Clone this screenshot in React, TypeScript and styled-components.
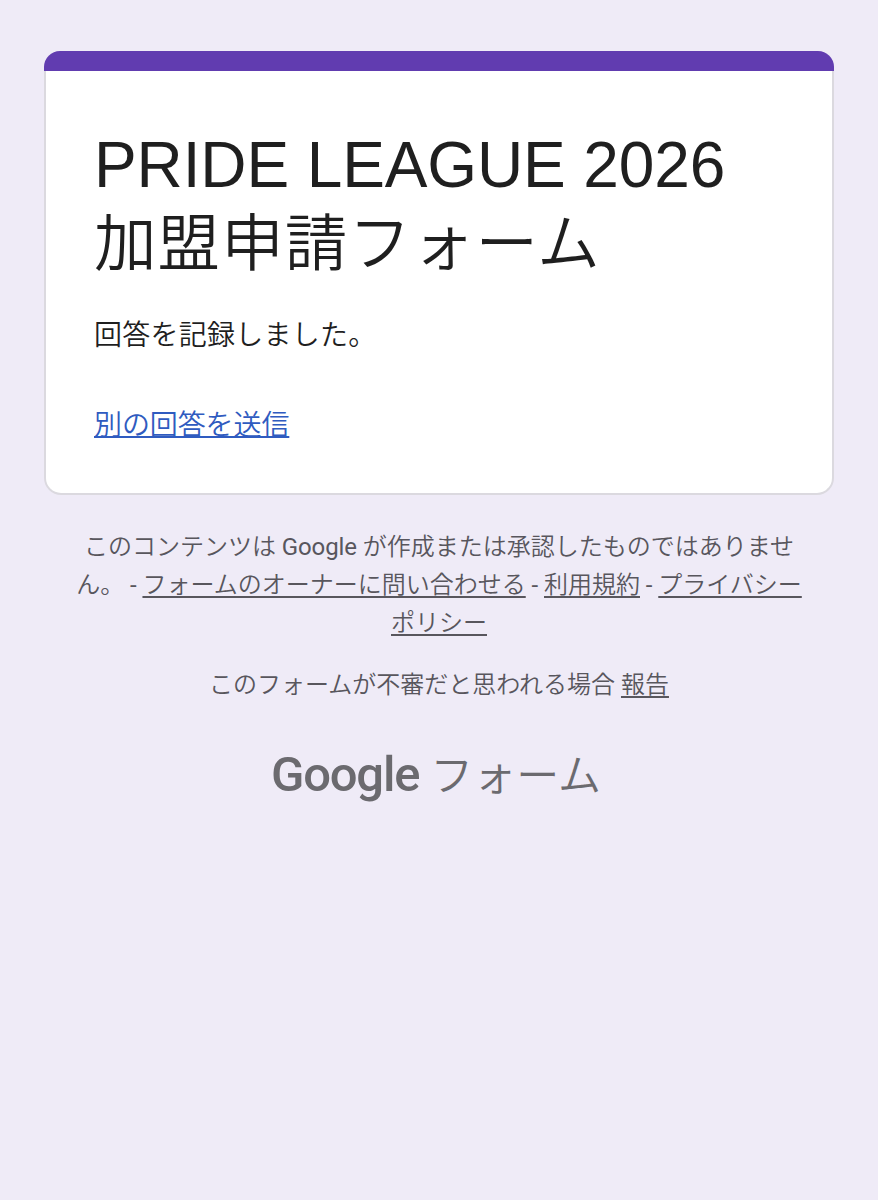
import React from "react";
import styled, { createGlobalStyle } from "styled-components";

const Global = createGlobalStyle`
  body { margin: 0; background: #efebf7; }
  * { box-sizing: border-box; }
`;
const Page = styled.main`
  min-height: 1200px;
  padding: 51px 44px 0;
  background: #efebf7;
  font-family: "Liberation Sans", "Noto Sans CJK JP", sans-serif;
  color: #1f1f1f;
`;
const Card = styled.section`
  height: 444px;
  display: flex;
  flex-direction: column;
`;
const Accent = styled.div`
  height: 20px;
  border-radius: 16px 16px 0 0;
  background: #613cb0;
`;
const CardBody = styled.div`
  flex: 1;
  padding: 55px 48px 0;
  background: #fff;
  border: 2px solid #dbd9df;
  border-top: 0;
  border-radius: 0 0 17px 17px;
`;
const Line = styled.span<{ $size: number; $height: number; $spacing?: number }>`
  display: block;
  white-space: nowrap;
  font-size: ${(p) => p.$size}px;
  line-height: ${(p) => p.$height}px;
  letter-spacing: ${(p) => p.$spacing ?? 0}px;
`;
const Title = styled.h1`
  margin: 0;
  font-weight: 350;
`;
const Latin = styled.span`
  font-weight: 400;
  letter-spacing: -0.1px;
`;
const Message = styled.p`
  margin: 32px 0 0;
  font-weight: 350;
`;
const Another = styled.a`
  display: block;
  margin-top: 50px;
  font-weight: 350;
  color: #2f5bc0;
  text-decoration: underline;
  text-decoration-thickness: 2px;
  text-decoration-skip-ink: none;
`;
const Footer = styled.footer`
  text-align: center;
  font-weight: 350;
  font-family: Roboto, "Noto Sans CJK JP", sans-serif;
  color: #58565d;
`;
const Notice = styled.p`
  margin: 33px 0 0;
`;
const Report = styled.p`
  margin: 24px 0 0;
`;
const Link = styled.a`
  text-decoration: underline;
  text-decoration-thickness: 2px;
  text-underline-offset: 3px;
  text-decoration-skip-ink: none;
`;
const Brand = styled.div`
  display: flex;
  justify-content: center;
  align-items: baseline;
  gap: 11px;
  margin: 41px 6px 0 0;
  color: #6b6a6f;
`;
const Wordmark = styled.span`
  font-family: Roboto, sans-serif;
  font-weight: 500;
  font-size: 49px;
  line-height: 60px;
  letter-spacing: -1.2px;
`;

export default function App() {
  return (
    <Page>
      <Global />
      <Card>
        <Accent />
        <CardBody>
          <Title>
            <Line $size={64} $height={78} $spacing={-0.12}>PRIDE LEAGUE 2026</Line>
            <Line $size={62.5} $height={80} $spacing={1.1}>加盟申請フォーム</Line>
          </Title>
          <Message><Line $size={28} $height={40} $spacing={0.25}>回答を記録しました。</Line></Message>
          <Another><Line $size={28} $height={40} $spacing={-0.1}>別の回答を送信</Line></Another>
        </CardBody>
      </Card>
      <Footer>
        <Notice>
          <Line $size={24} $height={38}>このコンテンツは <Latin>Google</Latin> が作成または承認したものではありませ</Line>
          <Line $size={24} $height={38}>ん。 <Latin>-</Latin> <Link>フォームのオーナーに問い合わせる</Link> <Latin>-</Latin> <Link>利用規約</Link> <Latin>-</Latin> <Link>プライバシー</Link></Line>
          <Line $size={24} $height={38}><Link>ポリシー</Link></Line>
        </Notice>
        <Report><Line $size={24} $height={38}>このフォームが不審だと思われる場合 <Link>報告</Link></Line></Report>
        <Brand>
          <Wordmark>Google</Wordmark>
          <Line $size={43} $height={56}>フォーム</Line>
        </Brand>
      </Footer>
    </Page>
  );
}
